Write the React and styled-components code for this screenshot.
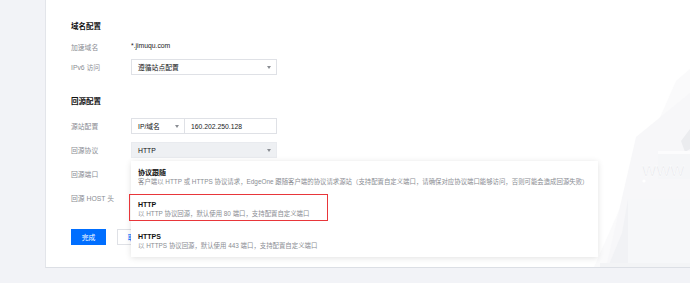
import React from 'react'
import styled, { createGlobalStyle } from 'styled-components'

const GlobalStyle = createGlobalStyle`
  html, body {
    margin: 0;
    padding: 0;
    background: #f2f3f7;
    font-family: "Liberation Sans", "Noto Sans CJK SC", sans-serif;
  }
`

const Page = styled.div`
  display: flex;
  height: 283px;
  width: 690px;
  overflow: hidden;
`

const Side = styled.aside`
  width: 45px;
  flex-shrink: 0;
  background: #f2f3f7;
`

const Main = styled.main`
  flex: 1;
  padding-bottom: 15px;
  display: flex;
`

const Card = styled.section`
  position: relative;
  flex: 1;
  background: #fff;
  border-left: 1px solid #e3e5ea;
  border-bottom: 1px solid #dcdfe5;
  padding: 22px 0 0 25px;
  box-sizing: border-box;
`

const Content = styled.div`
  position: relative;
  z-index: 1;
`

const SectionTitle = styled.h3`
  margin: ${(p) => p.top || 0}px 0 ${(p) => p.gap}px;
  font-size: 7.5px;
  line-height: 10px;
  height: 10px;
  font-weight: 700;
  color: #111;
`

const Rows = styled.div`
  display: flex;
  flex-direction: column;
  gap: ${(p) => p.gap}px;
`

const FormRow = styled.div`
  display: grid;
  grid-template-columns: 60px 146px;
  align-items: center;
  height: 16px;
`

const Label = styled.span`
  font-size: 6.8px;
  color: #8a8d93;
  white-space: nowrap;
`

const Value = styled.span`
  font-size: 6.8px;
  color: #222;
  margin-top: -4px;
`

const Caret = styled.i`
  width: 0;
  height: 0;
  border-left: 2px solid transparent;
  border-right: 2px solid transparent;
  border-top: 3px solid #8a8d93;
`

const Select = styled.div`
  position: relative;
  box-sizing: border-box;
  width: ${(p) => p.w || 146}px;
  height: 16px;
  padding: 0 5px 0 6px;
  display: flex;
  align-items: center;
  justify-content: space-between;
  border: 1px solid ${(p) => (p.active ? '#e9ebef' : '#dfe1e6')};
  background: ${(p) => (p.active ? '#eef0f3' : '#fff')};
  font-size: 6.8px;
  color: #111;
`

const Group = styled.div`
  display: flex;
`

const Input = styled.div`
  box-sizing: border-box;
  width: 92px;
  height: 16px;
  padding: 0 6px;
  display: flex;
  align-items: center;
  border: 1px solid #dfe1e6;
  border-left: none;
  font-size: 6.8px;
  color: #222;
`

const Actions = styled.div`
  display: flex;
  gap: 11px;
  margin-top: 23px;
`

const Button = styled.button`
  box-sizing: border-box;
  width: 35px;
  height: 16px;
  padding: 0;
  border: 1px solid ${(p) => (p.primary ? '#006eff' : '#dfe1e6')};
  background: ${(p) => (p.primary ? '#006eff' : '#fff')};
  color: ${(p) => (p.primary ? '#fff' : '#006eff')};
  font-family: inherit;
  font-size: 6.8px;
`

const Menu = styled.ul`
  position: absolute;
  top: 18px;
  left: -1px;
  z-index: 2;
  width: 467px;
  margin: 0;
  padding: 0;
  list-style: none;
  background: #fff;
  box-shadow: 0 1px 6px rgba(0, 0, 0, 0.12);
`

const MenuItem = styled.li`
  position: relative;
  height: 32px;
  box-sizing: border-box;
  padding: 7px 7px;
`

const ItemTitle = styled.div`
  font-size: 7px;
  line-height: 9px;
  font-weight: 700;
  color: #111;
`

const ItemDesc = styled.div`
  font-size: 6.4px;
  line-height: 9px;
  color: #8a8d93;
  white-space: nowrap;
`

const Highlight = styled.span`
  position: absolute;
  left: -2px;
  top: 1px;
  width: 199px;
  height: 27px;
  box-sizing: border-box;
  border: 1.5px solid #e8363a;
`

const Decor = styled.svg`
  position: absolute;
  right: 0;
  bottom: 0;
  pointer-events: none;
`

const options = [
  {
    title: '协议跟随',
    desc: '客户端以 HTTP 或 HTTPS 协议请求，EdgeOne 跟随客户端的协议请求源站（支持配置自定义端口，请确保对应协议端口能够访问，否则可能会造成回源失败）',
  },
  { title: 'HTTP', desc: '以 HTTP 协议回源，默认使用 80 端口，支持配置自定义端口', marked: true },
  { title: 'HTTPS', desc: '以 HTTPS 协议回源，默认使用 443 端口，支持配置自定义端口' },
]

const Illustration = () => (
  <Decor width="110" height="210" viewBox="0 0 110 210">
    <polygon points="96,24 110,12 110,210 14,210" fill="#fafafb" />
    <polygon points="56,80 110,36 110,210 26,210" fill="#f7f7f9" />
    <polygon points="42,176 48,142 48,206 28,210" fill="#f1f2f5" />
    <rect x="48" y="142" width="62" height="64" fill="#f6f7f9" />
    <rect x="20" y="206" width="90" height="4" fill="#f3f4f6" />
    <polygon points="101,84 110,72 110,92 105,95" fill="#ebecef" />
    <rect x="78" y="94" width="32" height="28" fill="#f5f6f8" />
    <rect x="78" y="94" width="32" height="3" fill="#fcfcfd" />
    <text x="62" y="119" fontSize="15" fontFamily="Liberation Sans, sans-serif" fill="#e2e3e8" stroke="#fff" strokeWidth="0.5">
      WWW
    </text>
    <circle cx="64" cy="124" r="1.6" fill="#fff" />
  </Decor>
)

export default function App() {
  return (
    <Page>
      <GlobalStyle />
      <Side />
      <Main>
        <Card>
          <Illustration />
          <Content>
            <SectionTitle gap={7}>域名配置</SectionTitle>
            <Rows gap={4}>
              <FormRow>
                <Label>加速域名</Label>
                <Value>*.jimuqu.com</Value>
              </FormRow>
              <FormRow>
                <Label>IPv6 访问</Label>
                <Select>
                  遵循站点配置
                  <Caret />
                </Select>
              </FormRow>
            </Rows>

            <SectionTitle top={22} gap={11}>回源配置</SectionTitle>
            <Rows gap={8}>
              <FormRow>
                <Label>源站配置</Label>
                <Group>
                  <Select w={54}>
                    IP/域名
                    <Caret />
                  </Select>
                  <Input>160.202.250.128</Input>
                </Group>
              </FormRow>
              <FormRow>
                <Label>回源协议</Label>
                <Select active>
                  HTTP
                  <Caret />
                  <Menu>
                    {options.map((o) => (
                      <MenuItem key={o.title}>
                        <ItemTitle>{o.title}</ItemTitle>
                        <ItemDesc>{o.desc}</ItemDesc>
                        {o.marked && <Highlight />}
                      </MenuItem>
                    ))}
                  </Menu>
                </Select>
              </FormRow>
              <FormRow>
                <Label>回源端口</Label>
              </FormRow>
              <FormRow>
                <Label>回源 HOST 头</Label>
              </FormRow>
            </Rows>

            <Actions>
              <Button primary>完成</Button>
              <Button>取消</Button>
            </Actions>
          </Content>
        </Card>
      </Main>
    </Page>
  )
}
